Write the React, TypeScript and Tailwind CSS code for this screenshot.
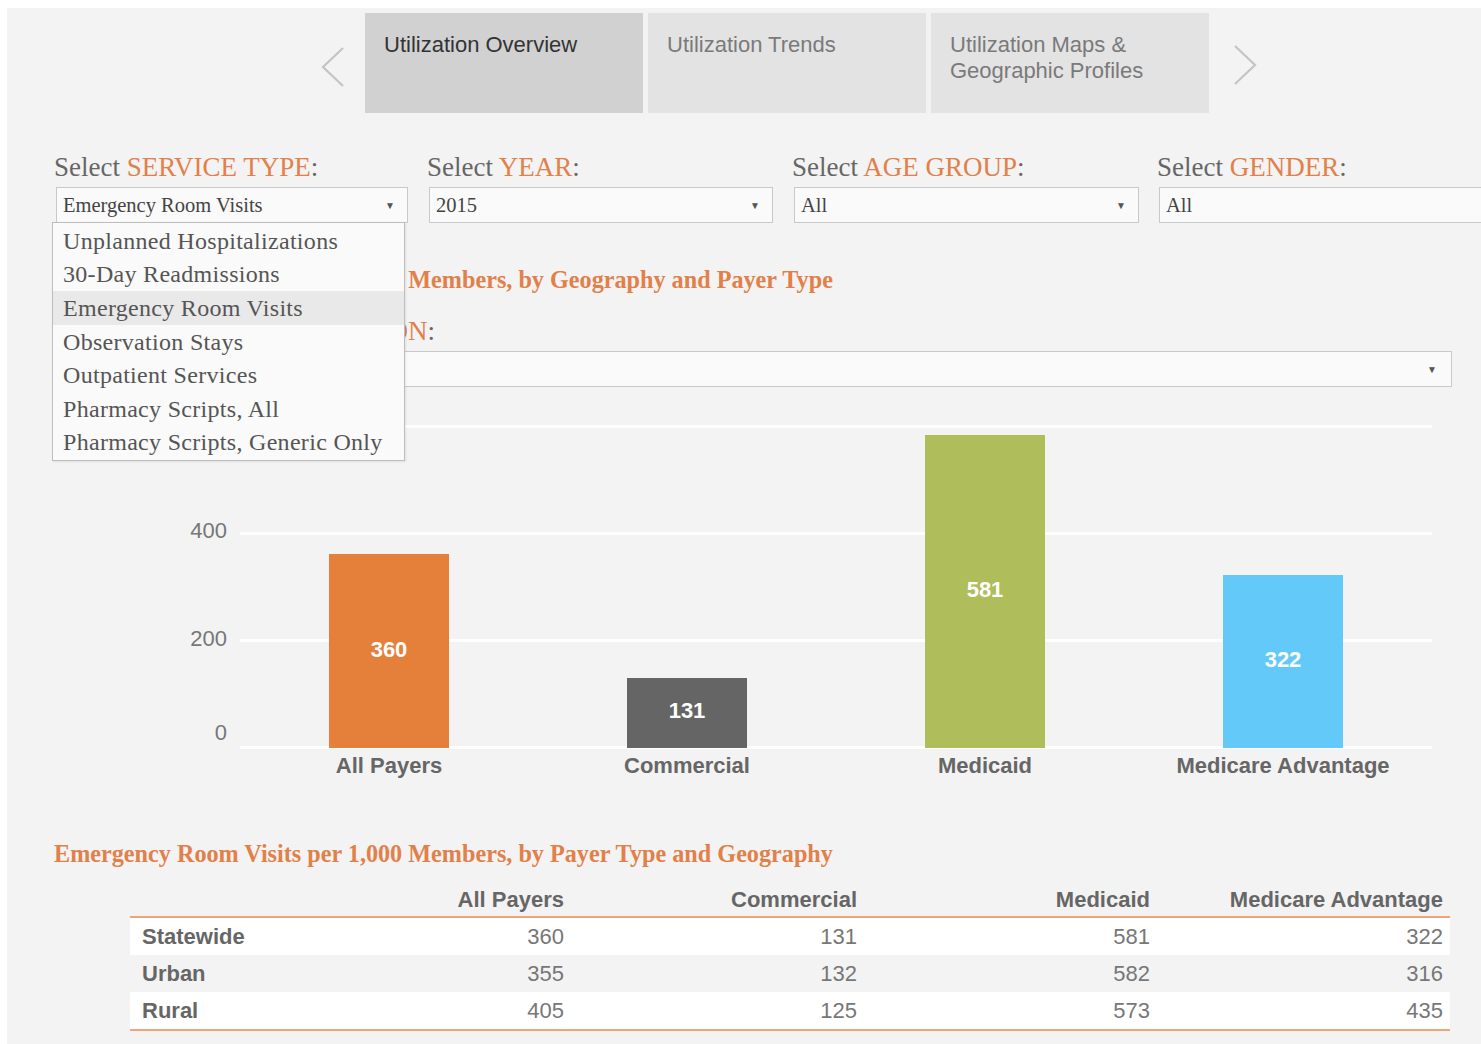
import React from "react";

const serif = { fontFamily: '"Liberation Serif", "Times New Roman", serif' };
const sans = { fontFamily: '"Liberation Sans", Arial, sans-serif' };

const tabs = [
  { label: "Utilization Overview", active: true },
  { label: "Utilization Trends", active: false },
  { label: "Utilization Maps &\nGeographic Profiles", active: false },
];

const filters = [
  { name: "SERVICE TYPE", value: "Emergency Room Visits", col: "w-[373px]", w: "w-[352px]" },
  { name: "YEAR", value: "2015", col: "w-[365px]", w: "w-[344px]" },
  { name: "AGE GROUP", value: "All", col: "w-[365px]", w: "w-[345px]" },
  { name: "GENDER", value: "All", col: "w-[365px]", w: "w-[345px]" },
];

const serviceTypes = [
  "Unplanned Hospitalizations",
  "30-Day Readmissions",
  "Emergency Room Visits",
  "Observation Stays",
  "Outpatient Services",
  "Pharmacy Scripts, All",
  "Pharmacy Scripts, Generic Only",
];

const bars = [
  { label: "All Payers", value: 360, color: "bg-[#e5803a]" },
  { label: "Commercial", value: 131, color: "bg-[#656565]" },
  { label: "Medicaid", value: 581, color: "bg-[#afbd5a]" },
  { label: "Medicare Advantage", value: 322, color: "bg-[#62c9f9]" },
];

const rows = [
  { geo: "Statewide", v: [360, 131, 581, 322], bg: "bg-white" },
  { geo: "Urban", v: [355, 132, 582, 316], bg: "bg-[#f3f3f3]" },
  { geo: "Rural", v: [405, 125, 573, 435], bg: "bg-white" },
];

const PX_PER_UNIT = 0.538;

function Chevron({ dir }: { dir: "left" | "right" }) {
  return (
    <svg width="26" height="42" viewBox="0 0 26 42" className="shrink-0">
      <polyline
        points={dir === "left" ? "23,2 3,21 23,40" : "3,2 23,21 3,40"}
        fill="none"
        stroke="#c4c4c4"
        strokeWidth="2.2"
      />
    </svg>
  );
}

function SelectBox({ value, className }: { value: string; className: string }) {
  return (
    <div
      className={`flex h-[36px] shrink-0 items-center justify-between border border-[#c9c9c9] bg-[#fafafa] pl-[6px] pr-[12px] ${className}`}
    >
      <span className="text-[20.5px] text-[#444]" style={serif}>
        {value}
      </span>
      <span className="text-[10px] text-[#555]" style={sans}>
        ▼
      </span>
    </div>
  );
}

export default function App() {
  return (
    <div className="min-h-screen bg-white">
      <div className="relative ml-[7px] mt-[8px] h-[1036px] overflow-hidden bg-[#f3f3f3]">
        {/* tab strip */}
        <div className="flex items-start pl-[313px] pt-[5px]">
          <div className="mr-[19px] mt-[33px]">
            <Chevron dir="left" />
          </div>
          <div className="flex gap-[5px]">
            {tabs.map((t) => (
              <div
                key={t.label}
                className={`h-[100px] w-[278px] whitespace-pre-line pl-[19px] pt-[19px] text-[22px] leading-[26px] ${
                  t.active ? "bg-[#d1d1d1] text-[#333]" : "bg-[#e3e3e3] text-[#7a7a7a]"
                }`}
                style={sans}
              >
                {t.label}
              </div>
            ))}
          </div>
          <div className="ml-[23px] mt-[31px]">
            <Chevron dir="right" />
          </div>
        </div>

        {/* filters */}
        <div className="relative pl-[47px]">
          <div className="mt-[38px] flex">
            {filters.map((f) => (
              <div key={f.name} className={`${f.col} shrink-0`}>
                <div className="h-[32px] whitespace-nowrap text-[27px] leading-[32px] text-[#666]" style={serif}>
                  Select <span className="text-[#e2804a]">{f.name}</span>:
                </div>
                <SelectBox value={f.value} className={`mt-[4px] ml-[2px] ${f.w}`} />
              </div>
            ))}
          </div>

          <div
            className="mt-[42px] h-[30px] text-[24.2px] font-bold leading-[30px] text-[#e2804a]"
            style={serif}
          >
            Emergency Room Visits per 1,000 Members, by Geography and Payer Type
          </div>

          <div className="mt-[20px] h-[32px] text-[27px] leading-[32px] text-[#666]" style={serif}>
            Select <span className="text-[#e2804a]">GEOGRAPHIC DIVISION</span>:
          </div>
          <div className="mt-[4px] ml-[2px] flex h-[36px] w-[1396px] items-center justify-end border border-[#c9c9c9] bg-[#fafafa] pr-[14px]">
            <span className="text-[10px] text-[#555]" style={sans}>
              ▼
            </span>
          </div>

          {/* open service type list */}
          <div className="absolute left-[45px] top-[71px] z-10 w-[353px] border border-[#bdbdbd] bg-[#fafafa] py-px shadow-[1px_1px_2px_rgba(0,0,0,0.08)]">
            {serviceTypes.map((s) => (
              <div
                key={s}
                className={`flex h-[33.6px] items-center pl-[10px] text-[24px] tracking-[0.3px] text-[#555] ${
                  s === "Emergency Room Visits" ? "bg-[#e9e9e9]" : ""
                }`}
                style={serif}
              >
                {s}
              </div>
            ))}
          </div>
        </div>

        {/* bar chart */}
        <div className="relative ml-[233px] mt-[38px] h-[323px] w-[1192px]" style={sans}>
          {[0, 107, 214, 321].map((y) => (
            <div key={y} className="absolute left-0 right-0 h-[3px] bg-white" style={{ top: y }} />
          ))}
          {[
            { t: "400", top: 93 },
            { t: "200", top: 201 },
            { t: "0", top: 295 },
          ].map((l) => (
            <div
              key={l.t}
              className="absolute right-[calc(100%+13px)] text-right text-[22px] leading-[26px] text-[#777]"
              style={{ top: l.top }}
            >
              {l.t}
            </div>
          ))}
          <div className="relative flex h-full items-end">
            {bars.map((b) => (
              <div key={b.label} className="flex flex-1 justify-center">
                <div
                  className={`flex w-[120px] items-center justify-center pb-[4px] text-[22px] font-bold text-white ${b.color}`}
                  style={{ height: b.value * PX_PER_UNIT }}
                >
                  {b.value}
                </div>
              </div>
            ))}
          </div>
        </div>
        <div className="ml-[233px] mt-[5px] flex w-[1192px]" style={sans}>
          {bars.map((b) => (
            <div key={b.label} className="flex-1 text-center text-[22px] font-bold leading-[26px] text-[#666]">
              {b.label}
            </div>
          ))}
        </div>

        {/* summary table */}
        <div
          className="ml-[47px] mt-[60px] h-[30px] text-[24.2px] font-bold leading-[30px] text-[#e2804a]"
          style={serif}
        >
          Emergency Room Visits per 1,000 Members, by Payer Type and Geography
        </div>
        <div className="ml-[123px] mt-[14px] w-[1320px] text-[22px]" style={sans}>
          <div className="grid h-[35px] grid-cols-[141px_293px_293px_293px_293px] items-center border-b-2 border-[#f0a574] font-bold text-[#666]">
            <div />
            {bars.map((b) => (
              <div key={b.label} className="text-right">
                {b.label}
              </div>
            ))}
          </div>
          <div className="border-b-2 border-[#f0a574]">
            {rows.map((r) => (
              <div
                key={r.geo}
                className={`grid h-[37px] grid-cols-[141px_293px_293px_293px_293px] items-center ${r.bg}`}
              >
                <div className="pl-[12px] font-bold text-[#666]">{r.geo}</div>
                {r.v.map((n, i) => (
                  <div key={i} className="text-right text-[#777]">
                    {n}
                  </div>
                ))}
              </div>
            ))}
          </div>
        </div>
      </div>
    </div>
  );
}
